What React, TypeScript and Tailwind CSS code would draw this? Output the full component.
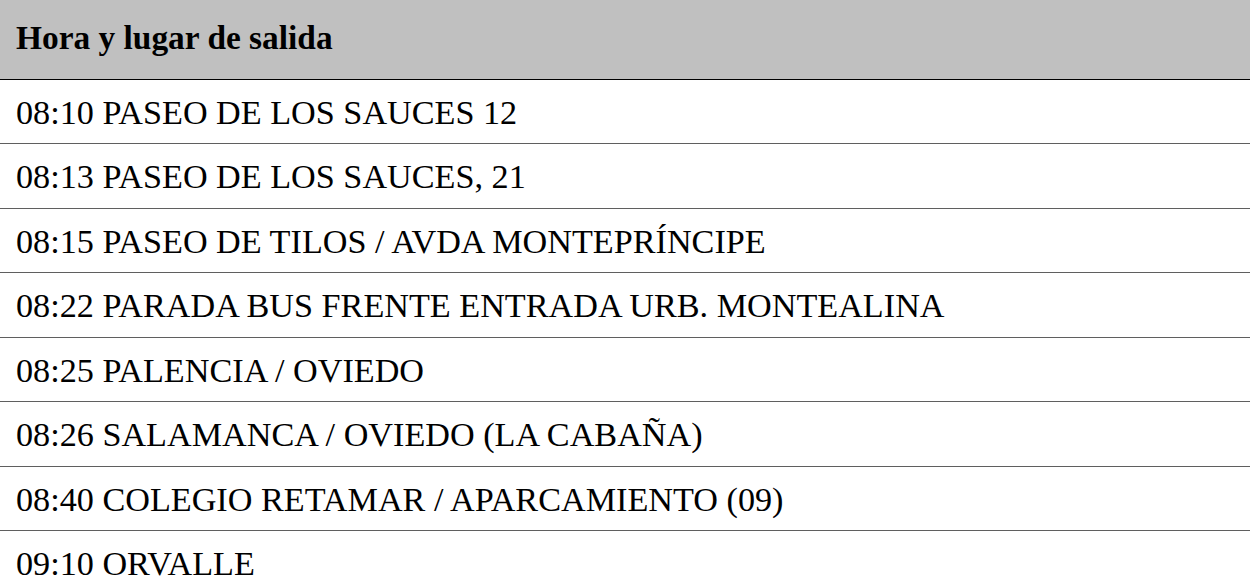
import React from "react";

const rows = [
  "08:10 PASEO DE LOS SAUCES 12",
  "08:13 PASEO DE LOS SAUCES, 21",
  "08:15 PASEO DE TILOS / AVDA MONTEPRÍNCIPE",
  "08:22 PARADA BUS FRENTE ENTRADA URB. MONTEALINA",
  "08:25 PALENCIA / OVIEDO",
  "08:26 SALAMANCA / OVIEDO (LA CABAÑA)",
  "08:40 COLEGIO RETAMAR / APARCAMIENTO (09)",
  "09:10 ORVALLE",
];

export default function App() {
  return (
    <div
      className="w-[1250px] h-[588px] overflow-hidden bg-white text-black"
      style={{ fontFamily: '"Liberation Serif", "Times New Roman", serif' }}
    >
      <div className="h-[79.5px] bg-[#c0c0c0] border-b-[1.5px] border-black flex items-center px-4 pb-[4px]">
        <span className="text-[33.4px] font-bold leading-none">Hora y lugar de salida</span>
      </div>
      {rows.map((r, i) => (
        <div
          key={i}
          className="h-[64.5px] border-b-[1.5px] border-[#5f5f5f] flex items-center px-4 pt-[3px]"
        >
          <span className="text-[34.2px] leading-none whitespace-nowrap">{r}</span>
        </div>
      ))}
    </div>
  );
}
